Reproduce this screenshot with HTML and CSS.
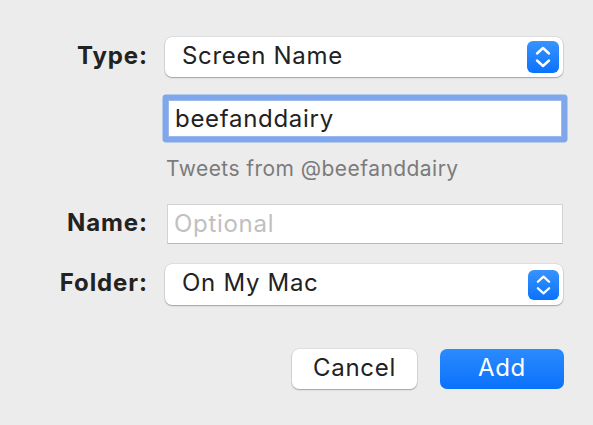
FILE: index.html
```html
<!DOCTYPE html>
<html>
<head>
<meta charset="utf-8">
<link rel="stylesheet" href="styles.css">
</head>
<body>
<div class="sheet">
  <div class="row row-type">
    <div class="label">Type:</div>
    <div class="popup">
      <span class="popup-text">Screen Name</span>
      <span class="stepper">
        <svg viewBox="0 0 32 32" width="32" height="32"><path d="M10 12.5 L16 7 L22 12.5" /><path d="M10 19.5 L16 25 L22 19.5" /></svg>
      </span>
    </div>
  </div>
  <div class="row row-field">
    <div class="label"></div>
    <div class="field focused">beefanddairy</div>
  </div>
  <div class="row row-hint">
    <div class="label"></div>
    <div class="hint">Tweets from @beefanddairy</div>
  </div>
  <div class="row row-name">
    <div class="label">Name:</div>
    <div class="field plain"><span class="placeholder">Optional</span></div>
  </div>
  <div class="row row-folder">
    <div class="label">Folder:</div>
    <div class="popup">
      <span class="popup-text">On My Mac</span>
      <span class="stepper">
        <svg viewBox="0 0 32 32" width="32" height="32"><path d="M10 12.5 L16 7 L22 12.5" /><path d="M10 19.5 L16 25 L22 19.5" /></svg>
      </span>
    </div>
  </div>
  <div class="buttons">
    <div class="btn btn-cancel">Cancel</div>
    <div class="btn btn-add">Add</div>
  </div>
</div>
</body>
</html>
```

FILE: styles.css
```css
html, body {
  margin: 0;
  padding: 0;
  background: #ececec;
}
body {
  font-family: Inter, "Liberation Sans", sans-serif;
  color: #222;
  width: 593px;
  height: 425px;
  overflow: hidden;
}
.sheet {
  padding-top: 37px;
  display: flex;
  flex-direction: column;
}
.row {
  display: grid;
  grid-template-columns: 147px 398px;
  column-gap: 18px;
  align-items: center;
}
.label {
  text-align: right;
  font-weight: 700;
  font-size: 24px;
  letter-spacing: 0.9px;
  margin-right: -0.9px;
  line-height: 28px;
  padding-bottom: 3px;
  color: #222;
}
.row-type { height: 40px; }
.row-field { margin-top: 23px; height: 37px; }
.row-hint { margin-top: 20px; }
.row-name { margin-top: 23px; height: 40px; }
.row-folder { margin-top: 20px; height: 41px; }

.popup {
  height: 100%;
  box-sizing: border-box;
  background: #fff;
  border-radius: 7px;
  box-shadow: 0 0 0 0.5px rgba(0,0,0,0.12), 0 1px 1.5px rgba(0,0,0,0.28);
  display: flex;
  align-items: center;
  justify-content: space-between;
  padding: 0 4px 0 17px;
}
.popup-text {
  font-size: 24px;
  letter-spacing: 0.7px;
  line-height: 28px;
  padding-bottom: 3px;
  color: #222;
}
.stepper {
  width: 32px;
  height: 32px;
  border-radius: 6px;
  background: linear-gradient(#3893ff, #0a72fb);
  display: flex;
}
.row-folder .stepper { width: 31px; height: 30px; }
.stepper svg { width: 100%; height: 100%; }
.stepper path {
  fill: none;
  stroke: #fff;
  stroke-width: 2.4;
  stroke-linecap: round;
  stroke-linejoin: round;
}
.field {
  height: 100%;
  box-sizing: border-box;
  background: #fff;
  display: flex;
  align-items: center;
  font-size: 24px;
  letter-spacing: 0.7px;
  line-height: 28px;
}
.field.focused {
  margin-left: 3px;
  margin-right: 1px;
  padding-left: 6px;
  color: #222;
  border: 1px solid #9bb9ef;
  box-shadow: 0 0 0 5.5px #80a7ec;
  border-radius: 1px;
}
.field.plain {
  margin-left: 2px;
  padding-left: 6px;
  border: 1px solid #d3d3d3;
  border-bottom-color: #b8b8b8;
}
.placeholder { color: #c0c0c0; }
.hint {
  font-size: 21px;
  letter-spacing: 0.45px;
  line-height: 24px;
  color: #7b7b7b;
  padding-left: 1px;
}
.buttons {
  margin-top: 44px;
  display: flex;
  justify-content: flex-end;
  gap: 23px;
  padding-right: 29px;
}
.btn {
  height: 40px;
  box-sizing: border-box;
  padding-bottom: 2px;
  border-radius: 7px;
  display: flex;
  align-items: center;
  justify-content: center;
  font-size: 24px;
  letter-spacing: 0.7px;
  line-height: 28px;
}
.btn-cancel {
  width: 125px;
  background: #fff;
  color: #222;
  box-shadow: 0 0 0 0.5px rgba(0,0,0,0.12), 0 1px 1.5px rgba(0,0,0,0.28);
}
.btn-add {
  width: 124px;
  background: linear-gradient(#2b8bff, #0a71fa);
  color: #fff;
}
```
